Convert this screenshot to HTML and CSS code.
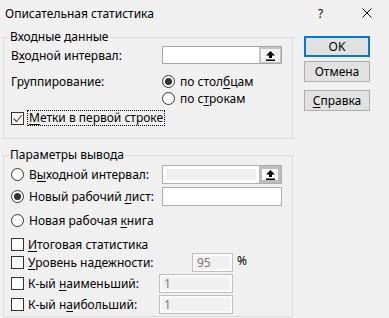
FILE: index.html
```html
<!DOCTYPE html>
<html lang="ru">
  <head>
    <meta charset="UTF-8" />
    <meta name="viewport" content="width=device-width, initial-scale=1.0" />
    <title>Описательная статистика</title>
    <link rel="stylesheet" href="styles.css">
  </head>
  <body>
    <div class="titlebar">
      <span class="title">Описательная статистика</span>
      <span class="help">?</span>
      <svg class="close" width="10" height="10" viewBox="0 0 10 10">
        <path d="M0.5 0.5 L9.5 9.5 M9.5 0.5 L0.5 9.5" stroke="#000" stroke-width="1" fill="none" />
      </svg>
    </div>

    <div class="body">
      <div class="groups">
        <fieldset class="group group-in">
          <legend>Входные данные</legend>

          <div class="row r1">
            <span class="lbl w151">В<u>х</u>одной интервал:</span>
            <div class="ref">
              <span class="ref-field"></span>
              <span class="ref-btn">
                <svg width="9" height="10" viewBox="0 0 9 10"><polygon points="4.5,0 9,4.5 6,4.5 6,7 3,7 3,4.5 0,4.5" fill="#000" /><rect x="0" y="8.5" width="9" height="1.5" fill="#000" /></svg>
              </span>
            </div>
          </div>

          <div class="row r2">
            <span class="lbl w151">Группирование:</span>
            <span class="radio checked"></span>
            <span>по стол<u>б</u>цам</span>
          </div>

          <div class="row r3">
            <span class="lbl w151"></span>
            <span class="radio"></span>
            <span>по с<u>т</u>рокам</span>
          </div>

          <div class="row r4">
            <span class="check">
              <svg width="11" height="11" viewBox="0 0 11 11"><polyline points="1.5,5.5 4.5,8.5 10,2" stroke="#444" stroke-width="1.1" fill="none" /></svg>
            </span>
            <span class="focus"><u>М</u>етки в первой строке</span>
          </div>
        </fieldset>

        <fieldset class="group group-out">
          <legend>Параметры вывода</legend>

          <div class="row o1">
            <span class="radio"></span>
            <span class="lbl w133">В<u>ы</u>ходной интервал:</span>
            <div class="ref disabled">
              <span class="ref-field"></span>
              <span class="ref-btn">
                <svg width="9" height="10" viewBox="0 0 9 10"><polygon points="4.5,0 9,4.5 6,4.5 6,7 3,7 3,4.5 0,4.5" fill="#000" /><rect x="0" y="8.5" width="9" height="1.5" fill="#000" /></svg>
              </span>
            </div>
          </div>

          <div class="row o2">
            <span class="radio checked"></span>
            <span class="lbl w133">Новый рабочий <u>л</u>ист:</span>
            <span class="field"></span>
          </div>

          <div class="row o3">
            <span class="radio"></span>
            <span>Новая рабочая <u>к</u>нига</span>
          </div>

          <div class="row o4">
            <span class="check"></span>
            <span><u>И</u>тоговая статистика</span>
          </div>

          <div class="row o5">
            <span class="check"></span>
            <span class="lbl w164"><u>У</u>ровень надежности:</span>
            <span class="num small">95</span>
            <span class="pct">%</span>
          </div>

          <div class="row o6">
            <span class="check"></span>
            <span class="lbl w131">К-ый <u>н</u>аименьший:</span>
            <span class="num">1</span>
          </div>

          <div class="row o7">
            <span class="check"></span>
            <span class="lbl w131">К-ый н<u>а</u>ибольший:</span>
            <span class="num">1</span>
          </div>
        </fieldset>
      </div>

      <div class="buttons">
        <div class="btn default">OK</div>
        <div class="btn">Отмена</div>
        <div class="btn help-btn"><u>С</u>правка</div>
      </div>
    </div>
  </body>
</html>
```

FILE: styles.css
```css
body {
  margin: 0;
  background: #f0f0f0;
  font-family: "Noto Sans", sans-serif;
  font-size: 12px;
  color: #000;
}

u {
  text-decoration-thickness: 1px;
  text-underline-offset: 2px;
}

.titlebar {
  height: 29px;
  display: flex;
  align-items: center;
  padding-left: 5px;
}

.title {
  flex: 1;
  margin-top: -3px;
}

.help {
  width: 8px;
  margin-top: -3px;
  margin-right: 36px;
}

.close {
  margin-top: -3px;
  margin-right: 17px;
}

.body {
  display: flex;
  align-items: flex-start;
  padding-left: 3px;
  gap: 11px;
}

.groups {
  width: 290px;
  display: flex;
  flex-direction: column;
  gap: 8px;
}

.group {
  margin: 0;
  min-width: 0;
  border: 1px solid #dcdcdc;
  padding: 0 7px 12px;
}

legend {
  padding: 0 1px;
  margin-left: -2px;
  line-height: 16px;
}

.row {
  display: flex;
  align-items: center;
  white-space: nowrap;
}

.lbl {
  flex: none;
}

.w151 { width: 151px; }
.w133 { width: 133px; }
.w164 { width: 164px; }
.w131 { width: 131px; }

/* входные данные */
.r1 { height: 18px; margin-top: 1px; }
.r2 { height: 17px; margin-top: 9px; }
.r3 { height: 17px; }
.r4 { height: 16px; margin-top: 3px; }

/* параметры вывода */
.o1 { height: 19px; margin-top: 2px; }
.o2 { height: 19px; margin-top: 3px; }
.o3 { height: 18px; margin-top: 5px; }
.o4 { height: 18px; margin-top: 6px; }
.o5 { height: 19px; margin-top: 0; }
.o6 { height: 19px; margin-top: 2px; }
.o7 { height: 18px; margin-top: 2px; }
.group-out { padding-bottom: 3px; }

.radio {
  flex: none;
  width: 13px;
  height: 13px;
  box-sizing: border-box;
  border: 1px solid #333;
  border-radius: 50%;
  background: #fff;
  display: inline-flex;
  align-items: center;
  justify-content: center;
  margin-right: 5px;
}

.radio.checked::after {
  content: "";
  width: 7px;
  height: 7px;
  border-radius: 50%;
  background: #333;
}

.check {
  flex: none;
  width: 13px;
  height: 13px;
  box-sizing: border-box;
  border: 1px solid #333;
  background: #fff;
  display: inline-flex;
  align-items: center;
  justify-content: center;
  margin-right: 4px;
}

.focus {
  outline: 1px dotted #000;
  padding: 0 1px;
  line-height: 14px;
}

.ref {
  display: flex;
  width: 120px;
  height: 18px;
  box-sizing: border-box;
  border: 1px solid #a5a5a5;
  background: #fff;
}

.ref-field {
  flex: 1;
}

.ref-btn {
  width: 22px;
  box-sizing: border-box;
  border: 2px solid #c4c4c4;
  border-right-width: 1px;
  border-bottom-width: 1px;
  background: #f4f4f4;
  display: flex;
  align-items: center;
  justify-content: center;
}

.ref.disabled {
  height: 19px;
  border-color: #adadad;
}

.ref.disabled .ref-field {
  background: #f0f0f0;
  box-shadow: inset 0 0 0 3px #fff;
}

.ref.disabled .ref-btn {
  border: 3px solid #bcbcbc;
  background: #fff;
}

.field {
  width: 120px;
  height: 19px;
  box-sizing: border-box;
  border: 1px solid #adadad;
  background: #fff;
}

.num {
  width: 74px;
  height: 19px;
  box-sizing: border-box;
  border: 1px solid #bfbfbf;
  background: #f0f0f0;
  box-shadow: inset 0 0 0 2px #f9f9f9;
  color: #7a7a7a;
  padding-left: 4px;
  line-height: 17px;
}

.num.small {
  width: 41px;
  padding-left: 4px;
}

.pct {
  margin-left: 4px;
  margin-top: -4px;
}

.buttons {
  margin-top: 7px;
  display: flex;
  flex-direction: column;
  gap: 4px;
}

.btn {
  width: 66px;
  height: 21px;
  box-sizing: border-box;
  border: 1px solid #adadad;
  background: #e1e1e1;
  display: flex;
  align-items: center;
  justify-content: center;
}

.btn.default {
  border: 2px solid #0078d7;
}

.help-btn {
  margin-top: 4px;
}
```
